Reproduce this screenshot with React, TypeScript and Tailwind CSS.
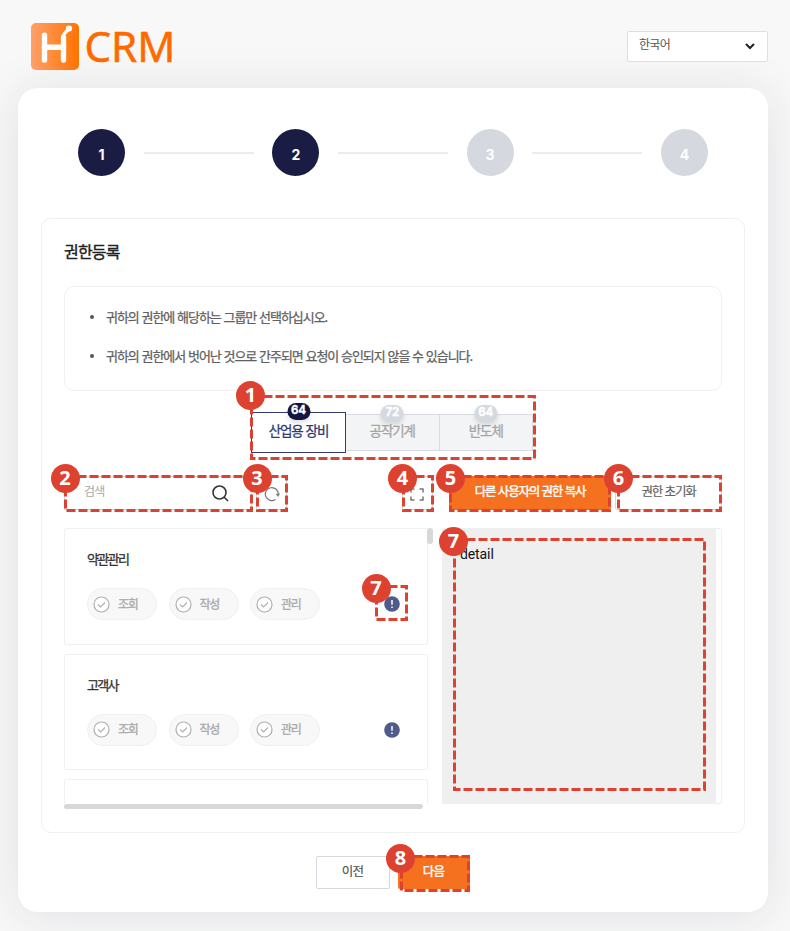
import React from "react";

const steps = [
  { n: "1", done: true },
  { n: "2", done: true },
  { n: "3", done: false },
  { n: "4", done: false },
];

const marks = [
  { n: "1", x: 250, y: 395, w: 286, h: 65, cx: 250.5, cy: 395.5 },
  { n: "2", x: 64, y: 475, w: 189, h: 37, cx: 65, cy: 478 },
  { n: "3", x: 256, y: 475, w: 32, h: 37, cx: 257, cy: 478 },
  { n: "4", x: 402, y: 475, w: 32, h: 37, cx: 402.5, cy: 478 },
  { n: "5", x: 449, y: 475, w: 162, h: 37, cx: 450.5, cy: 478 },
  { n: "6", x: 617, y: 475, w: 105, h: 37, cx: 618.5, cy: 478 },
  { n: "7", x: 375, y: 585, w: 33, h: 36, cx: 376, cy: 588 },
  { n: "7", x: 453, y: 538, w: 253, h: 253, cx: 453.5, cy: 541.5 },
  { n: "8", x: 400, y: 855, w: 70, h: 37, cx: 400.5, cy: 858.5 },
];

function Mark({ m }: { m: (typeof marks)[number] }) {
  return (
    <>
      <svg className="absolute" style={{ left: m.x, top: m.y }} width={m.w} height={m.h}>
        <rect
          x="1.5"
          y="1.5"
          width={m.w - 3}
          height={m.h - 3}
          fill="none"
          stroke="#dd4230"
          strokeWidth="3"
          strokeDasharray="9 3"
        />
      </svg>
      <div
        className="absolute flex size-[29px] items-center justify-center rounded-full bg-[#dd4230] pb-px font-['Noto_Sans'] text-[20px] leading-none font-bold text-white"
        style={{ left: m.cx - 14.5, top: m.cy - 14.5 }}
      >
        {m.n}
      </div>
    </>
  );
}

function Logo() {
  return (
    <svg className="ml-[31px] overflow-visible" width="146" height="47" viewBox="0 0 146 47">
      <defs>
        <linearGradient id="logo" x1="0" y1="0" x2="1" y2="0">
          <stop offset="0" stopColor="#ffa06a" />
          <stop offset="1" stopColor="#ff7300" />
        </linearGradient>
      </defs>
      <rect width="48" height="47" rx="5" fill="url(#logo)" />
      <g fill="none" stroke="#fff" strokeLinecap="round">
        <path d="M13.500 12.200V37M32.500 14.500V37" strokeWidth="5.400" />
        <path d="M13.500 24.200H32.500" strokeWidth="5.400" />
        <path d="M31.700 13.500L33.500 10.500L38 5.500" strokeWidth="3.400" />
      </g>
      <circle cx="38" cy="5.500" r="3.100" fill="#fff" />
      <text
        x="53.500"
        y="38.500"
        textLength="91"
        lengthAdjust="spacingAndGlyphs"
        fontFamily="Noto Sans"
        fontSize="42"
        fill="#ff6a00"
        stroke="#ff6a00"
        strokeWidth="0.500"
      >
        CRM
      </text>
    </svg>
  );
}

function Pill({ label }: { label: string }) {
  return (
    <div className="flex h-8 w-[70px] items-center rounded-full border border-[#f0f0f0] bg-[#f8f8f8] pl-[5px]">
      <svg width="17" height="17" viewBox="0 0 17 17" fill="none" stroke="#b0b0b0">
        <circle cx="8.500" cy="8.500" r="7.500" fill="#fff" strokeWidth="1.200" />
        <path d="M5 8.500L7.600 11L12 6.500" strokeWidth="1.100" />
      </svg>
      <span className="-mt-px ml-2 text-[12px] tracking-[-1.2px] text-[#a8a8a8] [-webkit-text-stroke:0.3px]">{label}</span>
    </div>
  );
}

function GroupCard({ title }: { title: string }) {
  return (
    <div className="h-[116.500px] w-[364px] shrink-0 rounded-[2px] border border-[#f0f0f0] bg-white pt-[20px] pl-[22px]">
      <div className="h-5 text-[13px] leading-5 tracking-[-1.65px] text-[#333] [-webkit-text-stroke:0.3px]">{title}</div>
      <div className="mt-[19px] flex items-center gap-[11.500px]">
        <Pill label="조회" />
        <Pill label="작성" />
        <Pill label="관리" />
        <svg className="ml-[52px]" width="16" height="16" viewBox="0 0 16 16">
          <circle cx="8" cy="8" r="7.800" fill="#505b89" />
          <path d="M8 4V8.800M8 10.500V12" stroke="#fff" strokeWidth="1.500" />
        </svg>
      </div>
    </div>
  );
}

const tabs = [
  { label: "산업용 장비", count: "64", active: true },
  { label: "공작기계", count: "72", active: false },
  { label: "반도체", count: "64", active: false },
];

export default function App() {
  return (
    <div className="relative h-[931px] w-[790px] overflow-hidden bg-[#f8f8f8] font-['Noto_Sans_CJK_KR',sans-serif] text-[13px]">
      <header className="flex h-[88px] items-start justify-between pt-[23px]">
        <Logo />
        <div className="relative z-10 mt-2 mr-[22px] flex h-[31px] w-[141px] items-center justify-between rounded-[2px] border border-[#dddfe5] bg-white pr-3 pl-[11px]">
          <span className="-mt-[5px] text-[12px] tracking-[-0.7px] text-[#555]">한국어</span>
          <svg className="-mt-0.5" width="10" height="8" viewBox="0 0 10 8" fill="none" stroke="#222" strokeWidth="2">
            <path d="M1 2L5 6L9 2" />
          </svg>
        </div>
      </header>

      <main className="ml-[18px] h-[824px] w-[750px] rounded-[20px] bg-white shadow-[0_3px_50px_rgba(30,40,65,0.11)]">
        <div className="flex items-center pt-[41px] pl-[60px]">
          {steps.map((s, i) => (
            <React.Fragment key={s.n}>
              {i > 0 && <div className="mx-[18.500px] h-0.5 w-[110.300px] bg-[#ececee]" />}
              <div
                className={
                  "flex size-[47px] items-center justify-center rounded-full pt-[3px] font-['Inter'] text-[14px] font-bold text-white " +
                  (s.done ? "bg-[#1a1c43]" : "bg-[#d5d9df]")
                }
              >
                {s.n}
              </div>
            </React.Fragment>
          ))}
        </div>

        <section className="mt-[42px] ml-[23px] h-[615px] w-[704px] rounded-[10px] border border-[#f0f0f1] px-[22px] pt-[20px]">
          <h1 className="h-6 text-[16px] leading-6 tracking-[-0.8px] text-[#222] [-webkit-text-stroke:0.4px]">권한등록</h1>
          <ul className="mt-[23px] flex h-[105px] flex-col gap-[19px] rounded-[10px] border border-[#f0f0f1] pt-[20px] pl-[25px] text-[#606060] [-webkit-text-stroke:0.25px]">
            {[
              "귀하의 권한에 해당하는 그룹만 선택하십시오.",
              "귀하의 권한에서 벗어난 것으로 간주되면 요청이 승인되지 않을 수 있습니다.",
            ].map((t) => (
              <li key={t} className="flex h-5 items-center leading-5 tracking-[-1.04px] whitespace-nowrap [word-spacing:0.9px]">
                <span className="mr-3 size-1 rounded-full bg-[#555]" />
                {t}
              </li>
            ))}
          </ul>

          <div className="mt-[20px] ml-[187px] flex h-[42px] items-center">
            {tabs.map((t) => (
              <div
                key={t.label}
                className={
                  "relative flex items-center justify-center text-[13.500px] tracking-[-1.100px] [word-spacing:1px] [-webkit-text-stroke:0.3px] " +
                  (t.active
                    ? "h-[41px] w-[95px] border border-[#333b70] bg-white text-[#333b70]"
                    : "h-[37px] w-[93.500px] border border-l-0 border-[#d9dce2] bg-[#f3f4f6] text-[#a6a6a6]")
                }
              >
                <span className="-mt-[3px]">{t.label}</span>
                <span
                  className={
                    "absolute -top-[10px] left-1/2 flex h-[17px] w-[23px] -translate-x-1/2 items-center justify-center rounded-full font-['Inter'] text-[11.500px] font-bold tracking-[-0.200px] text-white shadow-[0_3px_5px_rgba(0,0,0,0.12)] " +
                    (t.active ? "bg-[#14163f]" : "bg-[#d5d9df]")
                  }
                >
                  {t.count}
                </span>
              </div>
            ))}
          </div>

          <div className="mt-[23px] flex h-[34px] items-stretch">
            <div className="flex w-[188px] items-center justify-between border border-[#d5d9df] pr-[22px] pl-[19px] text-[12px] tracking-[-0.800px] text-[#a8a8a8]">
              <span className="-mt-1">검색</span>
              <svg width="17" height="17" viewBox="0 0 17 17" fill="none" stroke="#333" strokeWidth="1.600">
                <circle cx="7.500" cy="7.500" r="6.500" />
                <path d="M12 12L16 16" />
              </svg>
            </div>
            <div className="ml-1 flex w-[31px] items-center justify-center border border-[#d5d9df]">
              <svg className="mt-px" width="16" height="16" viewBox="0 0 16 16" fill="none" stroke="#777" strokeWidth="1.200">
                <path d="M11.500 13.500A6.500 6.500 0 1 1 14.300 8.500" />
                <path d="M12 8.500L14.300 10.500L15.500 7.500Z" fill="#777" strokeWidth="0.500" />
              </svg>
            </div>
            <div className="ml-[115px] flex w-[31px] items-center justify-center border border-[#d5d9df] pr-0.5">
              <svg className="mt-0.5" width="14" height="13" viewBox="0 0 14 13" fill="none" stroke="#777" strokeWidth="1.500">
                <path d="M1 4.500V1H4.500M9.500 1H13V4.500M13 8.500V12H9.500M4.500 12H1V8.500" />
              </svg>
            </div>
            <div className="ml-4 flex w-[162px] items-center justify-center rounded-[2px] bg-[#f57120] pb-[3px] text-[12.500px] tracking-[-1.200px] text-white [word-spacing:0.9px] [-webkit-text-stroke:0.4px]">
              다른 사용자의 권한 복사
            </div>
            <div className="ml-1 flex w-[107px] items-center justify-center rounded-[2px] border border-[#d5d9df] pb-[3px] text-[12.500px] tracking-[-1.200px] text-[#666] [word-spacing:0.9px] [-webkit-text-stroke:0.2px]">
              권한 초기화
            </div>
          </div>

          <div className="mt-[18px] flex">
            <div className="w-[378px]">
              <div className="flex h-[276px] overflow-hidden">
                <div className="flex flex-col gap-[9px]">
                  <GroupCard title="약관관리" />
                  <GroupCard title="고객사" />
                  <div className="h-[116px] w-[364px] shrink-0 rounded-[2px] border border-[#f0f0f0] bg-white" />
                </div>
                <div className="-ml-px h-4 w-1.5 rounded-full bg-[#d8d8d8]" />
              </div>
              <div className="relative h-[5px] w-[359px] rounded-full bg-[#d8d8d8]" />
            </div>
            <div className="h-[276px] w-[280px] rounded-[2px] border border-l-0 border-[#efefef] pr-[5px]">
              <div className="h-full bg-[#efefef] pt-[15px] pl-[18px] font-['Roboto'] text-[14px] leading-5 tracking-[-0.100px] text-[#111]">
                detail
              </div>
            </div>
          </div>
        </section>

        <div className="mt-[23px] flex justify-center gap-2 pr-px text-[12.500px] tracking-[-0.800px] [-webkit-text-stroke:0.2px]">
          <button className="h-[33px] w-[74px] rounded-[2px] border border-[#d5d9df] bg-white pb-0.5 text-[#555]">이전</button>
          <button className="h-[33px] w-[72px] rounded-[2px] bg-[#f57120] pb-0.5 text-white [-webkit-text-stroke:0.4px]">다음</button>
        </div>
      </main>

      {marks.map((m, i) => (
        <Mark key={i} m={m} />
      ))}
    </div>
  );
}
